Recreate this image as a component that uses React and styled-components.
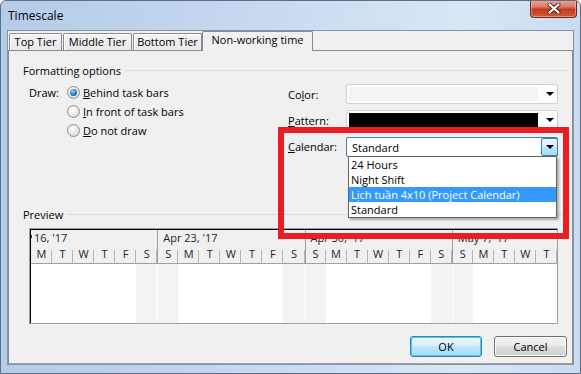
import React from 'react';
import styled, { createGlobalStyle } from 'styled-components';

const GlobalStyle = createGlobalStyle`
  html, body { margin: 0; padding: 0; }
  body {
    font-family: "Open Sans", "Liberation Sans", Arial, sans-serif;
    font-size: 11px;
    color: #000;
    background: #fff;
  }
`;

// Window frame (Aero glass look)
const Window = styled.div`
  position: relative;
  width: 581px;
  height: 374px;
  box-sizing: border-box;
  display: flex;
  flex-direction: column;
  border: 1px solid #5d6f84;
  border-radius: 6px 6px 0 0;
  background: linear-gradient(to right, #b4cce8 0%, #c6daf0 45%, #d8e7f6 80%, #cadcf0 100%);
  overflow: hidden;
`;

const TitleBar = styled.div`
  height: 29px;
  display: flex;
  align-items: flex-start;
  justify-content: space-between;
  padding-left: 7px;
`;

const Title = styled.div`
  margin-top: 6px;
  font-size: 12px;
  color: #000;
`;

const CloseButton = styled.div`
  width: 47px;
  height: 18px;
  margin-right: 3px;
  margin-top: -1px;
  box-sizing: border-box;
  border: 1px solid #6b2a1e;
  border-top: none;
  border-radius: 0 0 4px 4px;
  background: linear-gradient(#eaa898 0%, #dc7a63 40%, #c23c1f 55%, #d05a3b 100%);
  box-shadow: inset 0 0 0 1px rgba(255, 210, 200, 0.45);
  display: flex;
  align-items: center;
  justify-content: center;
`;

const Client = styled.div`
  flex: 1;
  margin: 0 6px 8px 6px;
  border: 1px solid #8294ab;
  background: #f0f0f0;
  display: flex;
  flex-direction: column;
`;

const TabRow = styled.div`
  height: 19px;
  display: flex;
  align-items: flex-end;
  padding-left: 1px;
`;

const Tab = styled.div`
  position: relative;
  box-sizing: border-box;
  width: ${(p) => p.$w}px;
  height: ${(p) => (p.$active ? 20 : 17)}px;
  margin-right: ${(p) => (p.$active ? 0 : 1)}px;
  margin-left: ${(p) => (p.$active ? -1 : 0)}px;
  margin-bottom: ${(p) => (p.$active ? -1 : 0)}px;
  z-index: ${(p) => (p.$active ? 1 : 0)};
  border: 1px solid #898c95;
  border-bottom: none;
  border-radius: 2px 2px 0 0;
  background: ${(p) =>
    p.$active ? '#f0f0f0' : 'linear-gradient(#f4f4f4, #e8e8e8)'};
  box-shadow: ${(p) => (p.$active ? 'none' : 'inset 1px 1px 0 #fff')};
  text-align: center;
  line-height: ${(p) => (p.$active ? 15 : 16)}px;
  white-space: nowrap;
`;

const Panel = styled.div`
  flex: 1;
  border: 1px solid #898c95;
  border-bottom-color: #a0a0a0;
  display: flex;
  flex-direction: column;
`;

const GroupHeader = styled.div`
  margin-top: ${(p) => p.$top}px;
  height: 15px;
  padding-left: 14px;
  padding-right: 4px;
  display: flex;
  align-items: center;
  &::after {
    content: '';
    flex: 1;
    height: 1px;
    margin-left: 4px;
    background: #d5dfe5;
  }
`;

const FormBody = styled.div`
  margin-top: 5px;
  padding-left: 20px;
  display: flex;
`;

const DrawGroup = styled.div`
  width: 259px;
  display: flex;
`;

const DrawLabel = styled.div`
  width: 38px;
  height: 19px;
  line-height: 19px;
`;

const RadioList = styled.div`
  display: flex;
  flex-direction: column;
`;

const RadioRow = styled.div`
  height: 19px;
  display: flex;
  align-items: center;
`;

const Radio = styled.span`
  width: 13px;
  height: 13px;
  box-sizing: border-box;
  border-radius: 50%;
  border: 1px solid #8e8f8f;
  background: radial-gradient(circle at 40% 35%, #ffffff 0%, #e6e6e6 55%, #cfcfcf 100%);
  margin-right: 3px;
  display: flex;
  align-items: center;
  justify-content: center;
  &::after {
    content: '';
    display: ${(p) => (p.$checked ? 'block' : 'none')};
    width: 7px;
    height: 7px;
    border-radius: 50%;
    background: radial-gradient(circle at 40% 35%, #9fdcff 0%, #2b8ad0 45%, #0b4f86 100%);
  }
`;

const Key = styled.u`
  text-decoration: underline;
`;

const FieldGrid = styled.div`
  padding-top: 1px;
  display: grid;
  grid-template-columns: 58px 212px;
  grid-template-rows: 20px 20px 20px;
  row-gap: 6px;
  & > :nth-child(n + 5) {
    margin-top: 1px;
  }
`;

const FieldLabel = styled.div`
  display: flex;
  align-items: center;
`;

const Combo = styled.div`
  position: relative;
  box-sizing: border-box;
  height: 20px;
  border: 1px solid ${(p) => (p.$focus ? '#3c7fb1' : '#d0d0d0')};
  border-radius: 2px;
  background: #fff;
  display: flex;
  align-items: center;
  padding: 2px 0 2px 2px;
`;

const Swatch = styled.div`
  width: 189px;
  height: 100%;
  background: ${(p) => p.$color};
`;

const ComboText = styled.div`
  flex: 1;
  padding-left: 3px;
`;

const Arrow = styled.span`
  width: 0;
  height: 0;
  border-left: 4px solid transparent;
  border-right: 4px solid transparent;
  border-top: 4px solid #000;
`;

const PlainDrop = styled.div`
  flex: 1;
  display: flex;
  justify-content: center;
  align-items: center;
  padding-left: 4px;
`;

const DropButton = styled.div`
  width: 17px;
  height: 18px;
  margin: -2px -1px -2px 0;
  box-sizing: border-box;
  border: 1px solid #3c7fb1;
  border-radius: 2px;
  background: linear-gradient(#e8f5fd 0%, #d9f0fc 45%, #bee6fd 50%, #a7d9f5 100%);
  display: flex;
  align-items: center;
  justify-content: center;
`;

const DropList = styled.div`
  position: absolute;
  top: 100%;
  left: 1px;
  right: 0;
  box-sizing: border-box;
  border: 1px solid #646464;
  background: #fff;
  box-shadow: 2px 2px 2px rgba(0, 0, 0, 0.3);
  z-index: 5;
`;

const DropItem = styled.div`
  height: 15px;
  line-height: 15px;
  padding-left: 2px;
  white-space: nowrap;
  background: ${(p) => (p.$selected ? '#3399ff' : 'transparent')};
  color: ${(p) => (p.$selected ? '#fff' : '#000')};
`;

const PreviewBox = styled.div`
  margin: 6px 0 0 20px;
  width: 529px;
  height: 96px;
  box-sizing: border-box;
  border: 1px solid #a0a0a0;
  background: #fff;
  overflow: hidden;
`;

const Timeline = styled.div`
  display: grid;
  grid-template-columns: repeat(25, 1fr);
  grid-template-rows: 15px 19px 1fr;
  height: 100%;
  box-sizing: border-box;
  border-top: 1px solid #000;
  border-left: 1px solid #000;
`;

const DateCell = styled.div`
  position: relative;
  grid-column: span ${(p) => p.$span};
  background: #f0f0f0;
  border-left: ${(p) => (p.$first ? 'none' : '1px solid #a0a0a0')};
  padding-left: ${(p) => (p.$first ? 3 : 5)}px;
  white-space: nowrap;
  line-height: 15px;
  color: #1e1e1e;
  ${(p) =>
    p.$first
      ? `&::before {
    content: '';
    position: absolute;
    left: 0;
    top: 5px;
    width: 1px;
    height: 3px;
    background: #333;
  }`
      : ''}
`;

const DayCell = styled.div`
  position: relative;
  background: #f0f0f0;
  border-bottom: 1px solid #a0a0a0;
  text-align: center;
  line-height: 17px;
  color: #1e1e1e;
  ${(p) => (p.$week ? 'border-left: 1px solid #a0a0a0;' : '')}
  &::after {
    content: '';
    position: absolute;
    right: 0;
    top: 5px;
    bottom: 0;
    width: 1px;
    background: #b4b4b4;
  }
`;

const BodyCell = styled.div`
  background: ${(p) => (p.$weekend ? '#f3f3f3' : '#ffffff')};
  ${(p) => (p.$week ? 'border-left: 1px solid #ffffff;' : '')}
`;

const ButtonRow = styled.div`
  margin-top: 12px;
  padding-right: 5px;
  display: flex;
  justify-content: flex-end;
  gap: 12px;
`;

const Button = styled.div`
  width: ${(p) => p.$w}px;
  height: 21px;
  box-sizing: border-box;
  border-radius: 3px;
  border: 1px solid ${(p) => (p.$default ? '#3c7fb1' : '#707070')};
  background: ${(p) =>
    p.$default
      ? 'linear-gradient(#eaf6fd 0%, #d9f0fc 45%, #bee6fd 50%, #a7d9f5 100%)'
      : 'linear-gradient(#f2f2f2 0%, #ebebeb 45%, #dddddd 50%, #cfcfcf 100%)'};
  box-shadow: inset 0 0 0 1px ${(p) => (p.$default ? '#48c8f5' : '#fcfcfc')};
  display: flex;
  align-items: center;
  justify-content: center;
`;

const Annotation = styled.div`
  position: absolute;
  left: 277px;
  top: 126px;
  width: 291px;
  height: 112px;
  box-sizing: border-box;
  border: 6px solid #ec1c24;
  pointer-events: none;
  z-index: 10;
`;

const days = ['M', 'T', 'W', 'T', 'F', 'S', 'S', 'M', 'T', 'W', 'T', 'F', 'S', 'S', 'M', 'T', 'W', 'T', 'F', 'S', 'S', 'M', 'T', 'W', 'T'];
const weeks = [
  { label: "16, '17", span: 6 },
  { label: "Apr 23, '17", span: 7 },
  { label: "Apr 30, '17", span: 7 },
  { label: "May 7, '17", span: 5 },
];
const weekStarts = [6, 13, 20];

const CloseGlyph = () => (
  <svg width="14" height="11" viewBox="0 0 14 11">
    <path d="M2.5 1.5 L11.5 9.5 M11.5 1.5 L2.5 9.5" stroke="#5a2418" strokeWidth="4" strokeLinecap="round" />
    <path d="M2.5 1.5 L11.5 9.5 M11.5 1.5 L2.5 9.5" stroke="#ffffff" strokeWidth="2.2" strokeLinecap="round" />
  </svg>
);

const App = () => {
  return (
    <>
      <GlobalStyle />
      <Window>
        <TitleBar>
          <Title>Timescale</Title>
          <CloseButton>
            <CloseGlyph />
          </CloseButton>
        </TitleBar>
        <Client>
          <TabRow>
            <Tab $w={53}>Top Tier</Tab>
            <Tab $w={69}>Middle Tier</Tab>
            <Tab $w={69}>Bottom Tier</Tab>
            <Tab $w={111} $active>Non-working time</Tab>
          </TabRow>
          <Panel>
            <GroupHeader $top={12}>Formatting options</GroupHeader>
            <FormBody>
              <DrawGroup>
                <DrawLabel>Draw:</DrawLabel>
                <RadioList>
                  <RadioRow>
                    <Radio $checked />
                    <span><Key>B</Key>ehind task bars</span>
                  </RadioRow>
                  <RadioRow>
                    <Radio />
                    <span><Key>I</Key>n front of task bars</span>
                  </RadioRow>
                  <RadioRow>
                    <Radio />
                    <span><Key>D</Key>o not draw</span>
                  </RadioRow>
                </RadioList>
              </DrawGroup>
              <FieldGrid>
                <FieldLabel>Co<Key>l</Key>or:</FieldLabel>
                <Combo>
                  <Swatch $color="#f4f4f4" />
                  <PlainDrop><Arrow /></PlainDrop>
                </Combo>
                <FieldLabel><Key>P</Key>attern:</FieldLabel>
                <Combo>
                  <Swatch $color="#000000" />
                  <PlainDrop><Arrow /></PlainDrop>
                </Combo>
                <FieldLabel><Key>C</Key>alendar:</FieldLabel>
                <Combo $focus>
                  <ComboText>Standard</ComboText>
                  <DropButton><Arrow /></DropButton>
                  <DropList>
                    <DropItem>24 Hours</DropItem>
                    <DropItem>Night Shift</DropItem>
                    <DropItem $selected>Lịch tuần 4x10 (Project Calendar)</DropItem>
                    <DropItem>Standard</DropItem>
                  </DropList>
                </Combo>
              </FieldGrid>
            </FormBody>
            <GroupHeader $top={51}>Preview</GroupHeader>
            <PreviewBox>
              <Timeline>
                {weeks.map((w, i) => (
                  <DateCell key={w.label} $span={w.span} $first={i === 0}>
                    {w.label}
                  </DateCell>
                ))}
                {days.map((d, i) => (
                  <DayCell key={'d' + i} $week={weekStarts.includes(i)}>{d}</DayCell>
                ))}
                {days.map((d, i) => (
                  <BodyCell
                    key={'b' + i}
                    $weekend={d === 'S'}
                    $week={weekStarts.includes(i)}
                  />
                ))}
              </Timeline>
            </PreviewBox>
            <ButtonRow>
              <Button $w={72} $default>OK</Button>
              <Button $w={73}>Cancel</Button>
            </ButtonRow>
          </Panel>
        </Client>
        <Annotation />
      </Window>
    </>
  );
};

export default App;
